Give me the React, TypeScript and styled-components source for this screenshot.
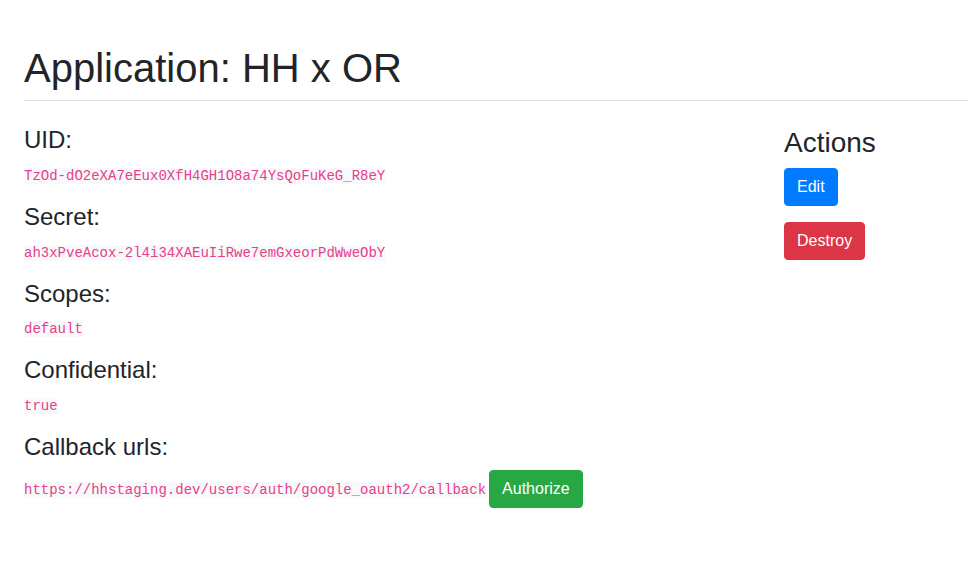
import React from "react";
import styled, { createGlobalStyle } from "styled-components";

const Global = createGlobalStyle`
  html, body { margin: 0; padding: 0; background: #fff; overflow: hidden; }
  body {
    font-family: "Liberation Sans", Arial, sans-serif;
    font-size: 16px;
    line-height: 1.5;
    color: #212529;
  }
  * { box-sizing: border-box; }
`;

const Page = styled.div`
  padding: 44px 0 0 24px;
`;

const Header = styled.div`
  border-bottom: 1px solid #dee2e6;
  margin-bottom: 25px;
`;

const Title = styled.h1`
  margin: 0 0 8px;
  font-size: 40px;
  font-weight: 500;
  line-height: 1.2;
`;

const Row = styled.div`
  display: grid;
  grid-template-columns: 730px 1fr;
  column-gap: 30px;
  align-items: start;
`;

const Label = styled.h4`
  margin: 0 0 8px;
  font-size: 24px;
  font-weight: 500;
  line-height: 1.2;
`;

const ActionsTitle = styled.h3`
  margin: 0 0 8px;
  font-size: 28px;
  font-weight: 500;
  line-height: 1.2;
`;

const Para = styled.p`
  margin: 0 0 16px;
`;

const Code = styled.code`
  font-family: "Liberation Mono", "Courier New", monospace;
  font-size: 14px;
  color: #e83e8c;
  background-color: #f8f9fa;
  word-break: break-word;
`;

const Table = styled.table`
  border-collapse: collapse;
  td { padding: 0; vertical-align: middle; }
`;

const UrlCell = styled.td`
  padding-right: 3px !important;
`;

const Button = styled.button<{ $variant: "primary" | "danger" | "success" }>`
  display: inline-block;
  font-family: "Liberation Sans", Arial, sans-serif;
  font-size: 16px;
  line-height: 1.5;
  font-weight: 400;
  padding: 6px 12px;
  border-radius: 4px;
  color: #fff;
  vertical-align: middle;
  cursor: pointer;
  border: 1px solid
    ${(p) =>
      p.$variant === "primary" ? "#007bff" : p.$variant === "danger" ? "#dc3545" : "#28a745"};
  background-color: ${(p) =>
    p.$variant === "primary" ? "#007bff" : p.$variant === "danger" ? "#dc3545" : "#28a745"};
`;

const fields: [string, string][] = [
  ["UID:", "TzOd-dO2eXA7eEux0XfH4GH1O8a74YsQoFuKeG_R8eY"],
  ["Secret:", "ah3xPveAcox-2l4i34XAEuIiRwe7emGxeorPdWweObY"],
  ["Scopes:", "default"],
  ["Confidential:", "true"],
];

export default function App() {
  return (
    <>
      <Global />
      <Page>
        <Header>
          <Title>Application: HH x OR</Title>
        </Header>
        <Row>
          <div>
            {fields.map(([label, value]) => (
              <React.Fragment key={label}>
                <Label>{label}</Label>
                <Para>
                  <Code>{value}</Code>
                </Para>
              </React.Fragment>
            ))}
            <Label>Callback urls:</Label>
            <Table>
              <tbody>
                <tr>
                  <UrlCell>
                    <Code>https://hhstaging.dev/users/auth/google_oauth2/callback</Code>
                  </UrlCell>
                  <td>
                    <Button $variant="success">Authorize</Button>
                  </td>
                </tr>
              </tbody>
            </Table>
          </div>
          <div>
            <ActionsTitle>Actions</ActionsTitle>
            <Para>
              <Button $variant="primary">Edit</Button>
            </Para>
            <Para>
              <Button $variant="danger">Destroy</Button>
            </Para>
          </div>
        </Row>
      </Page>
    </>
  );
}
